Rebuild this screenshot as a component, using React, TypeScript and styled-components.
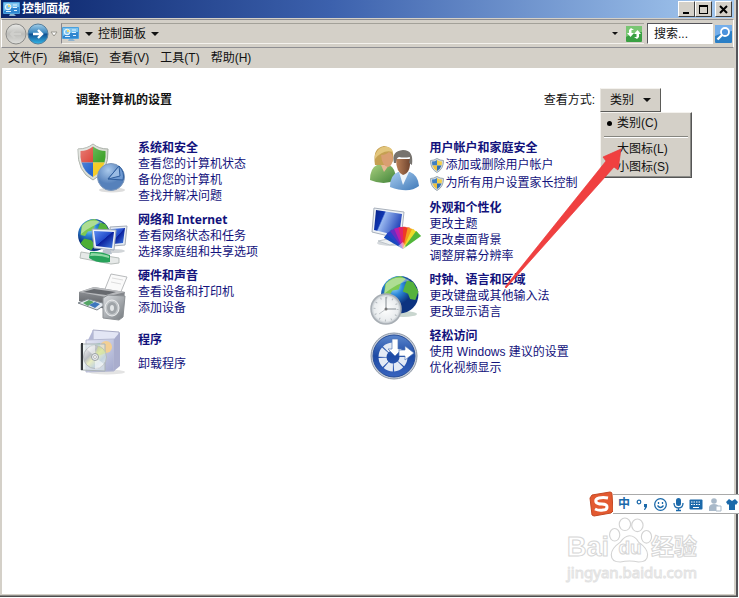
import React from "react";
import styled, { createGlobalStyle, css } from "styled-components";

const sans = '"Liberation Sans", "Noto Sans CJK SC", sans-serif';
const face = "#d4d0c8";
const navy = "#12127c";

const GlobalStyle = createGlobalStyle`
  * { box-sizing: border-box; }
  body { margin: 0; background: #fff; font: 12px/16px ${sans}; color: #111; }
  button, input { font: inherit; color: inherit; margin: 0; padding: 0; border: 0; background: none; border-radius: 0; }
  ul { list-style: none; margin: 0; padding: 0; }
  h1, h2, p { margin: 0; font-size: 12px; line-height: 16px; }
  svg { display: block; flex: none; overflow: visible; }
`;

const Desktop = styled.div`
  position: relative;
  min-height: 100vh;
  padding: 0 1px 1px 0;
  display: flex;
  overflow: hidden;
`;
const Window = styled.div`
  flex: 1;
  display: flex;
  flex-direction: column;
  background: ${face};
  padding: 0 2px 2px 1px;
  border-right: 2px solid #55555a;
  border-bottom: 1px solid #4c4c4c;
  box-shadow: inset 0 -1px 0 #8c8c88;
`;
const TitleBar = styled.header`
  display: flex;
  align-items: center;
  gap: 2px;
  height: 18px;
  padding: 0 2px;
  color: #fff;
  background: linear-gradient(90deg, #0a246a, #3c61ad 45%, #a6caf0);
`;
const Title = styled.h1`
  flex: 1;
  font-weight: 700;
`;
const Captions = styled.div`
  display: flex;
`;
const CaptionButton = styled.button<{ $apart?: boolean }>`
  width: 17px;
  height: 16px;
  display: grid;
  place-items: center;
  background: ${face};
  border: 1px solid;
  border-color: #fff #404040 #404040 #fff;
  margin-left: ${(p) => (p.$apart ? "3px" : "0")};
`;
const Toolbar = styled.div`
  display: flex;
  align-items: center;
  height: 29px;
  margin-top: 1px;
  padding: 0 1px 0 3px;
  border: 1px solid;
  border-color: #8e8e92 #fff #8e8e92 #fff;
`;
const NavButton = styled.button`
  display: block;
`;
const Address = styled.div`
  flex: 1;
  display: flex;
  align-items: center;
  height: 21px;
  margin-left: 3px;
  border-top: 1px solid #a3a199;
  border-left: 1px solid #87858c;
  border-bottom: 1px solid #f4f2ee;
`;
const CrumbButton = styled.button`
  display: flex;
  align-items: center;
  gap: 5px;
  margin-left: 6px;
`;
const Spacer = styled.span`
  flex: 1;
`;
const RefreshButton = styled.button`
  margin: 0 2px 0 8px;
`;
const Search = styled.form`
  display: flex;
  align-items: center;
  gap: 2px;
  margin-left: 3px;
`;
const SearchInput = styled.input`
  width: 66px;
  height: 21px;
  padding: 0 6px;
  background: #fff;
  border: 1px solid;
  border-color: #55555a #fff #fff #55555a;
  outline: 0;
  &::placeholder { color: #111; opacity: 1; }
`;
const MenuBar = styled.nav`
  display: flex;
  gap: 11px;
  height: 20px;
  padding: 2px 7px;
`;
const MenuButton = styled.button`
  line-height: 16px;
`;
const Content = styled.main`
  flex: 1;
  background: #fff;
  margin-left: 1px;
  padding: 20px 73px 40px 74px;
`;
const ContentHead = styled.div`
  display: flex;
  align-items: center;
  height: 24px;
`;
const Heading = styled.h2`
  flex: 1;
`;
const ViewPicker = styled.div`
  position: relative;
  display: flex;
  align-items: center;
  gap: 5px;
`;
const ViewButton = styled.button`
  display: flex;
  align-items: center;
  gap: 9px;
  height: 24px;
  padding: 0 9px;
  background: ${face};
  border: 1px solid;
  border-color: #f4f2ee #5b5b58 #5b5b58 #e8e5df;
`;
const ViewMenu = styled.ul`
  position: absolute;
  top: 24px;
  right: -31px;
  width: 92px;
  padding: 1px 3px;
  background: ${face};
  border: 1px solid;
  border-color: #f4f2ee #555 #555 #f4f2ee;
  box-shadow: inset -1px -1px 0 #8c8c88;
`;
const ViewItem = styled.button`
  display: flex;
  align-items: center;
  width: 100%;
  height: 18px;
  white-space: nowrap;
`;
const Mark = styled.span`
  width: 13px;
  display: flex;
  justify-content: center;
  padding-right: 3px;
`;
const Separator = styled.li`
  height: 2px;
  margin: 4px 0 2px;
  border-top: 1px solid #85857f;
  border-bottom: 1px solid #fff;
`;
const Arrow = styled.svg`
  position: absolute;
  top: 61px;
  right: 38px;
  pointer-events: none;
`;
const Categories = styled.div`
  display: grid;
  grid-template-columns: 1fr 1fr;
  margin-top: 28px;
  padding-left: 2px;
`;
const Column = styled.div`
  display: flex;
  flex-direction: column;
  gap: 8px;
`;
const Category = styled.section`
  display: flex;
  gap: 12px;
  min-height: 48px;
`;
const IconBox = styled.div`
  width: 48px;
  height: 44px;
  margin-top: 4px;
`;
const Links = styled.div<{ $airy?: boolean }>`
  display: flex;
  flex-direction: column;
  align-items: flex-start;
  ${(p) => p.$airy && css`gap: 8px; padding-top: 8px;`}
`;
const linkLook = css`
  color: ${navy};
  text-decoration: none;
  &:hover { text-decoration: underline; }
`;
const CategoryLink = styled.a`
  ${linkLook}
  font-family: "Noto Sans", "Noto Sans CJK SC", sans-serif;
  font-weight: 700;
  line-height: 16px;
  height: 16px;
`;
const TaskLink = styled.a<{ $shield?: boolean }>`
  ${linkLook}
  display: flex;
  align-items: center;
  gap: 2px;
  height: ${(p) => (p.$shield ? "18px" : "16px")};
  white-space: pre;
`;
const InputBar = styled.div`
  position: absolute;
  right: 0;
  top: 492px;
  display: flex;
  align-items: center;
`;
const InputStrip = styled.div`
  display: flex;
  align-items: center;
  gap: 4px;
  height: 20px;
  padding-left: 4px;
  background: #fff;
  border: 1px solid #aaa;
  border-width: 1px 0;
  color: #1b69aa;
  font-weight: 700;
`;
const Tool = styled.button`
  width: 14px;
  height: 16px;
  display: grid;
  place-items: center;
`;
const Watermark = styled.div`
  position: absolute;
  right: 40px;
  top: 518px;
  width: 132px;
  color: #fff;
  -webkit-text-stroke: 1px #d6d6d6;
`;
const WatermarkName = styled.div`
  display: flex;
  align-items: flex-end;
  height: 44px;
  font: 700 27px/30px ${sans};
`;
const Paw = styled.div`
  position: relative;
  width: 42px;
  height: 44px;
  display: flex;
  justify-content: center;
  align-items: flex-end;
  font: 700 19px/28px ${sans};
`;
const PawShape = styled.svg`
  position: absolute;
  inset: 0;
`;
const PawText = styled.span`
  position: relative;
`;
const WatermarkCjk = styled.span`
  font-size: 23px;
`;
const WatermarkSite = styled.div`
  font: 15px/20px "Noto Sans", sans-serif;
  -webkit-text-stroke: 1px #e2e2e2;
`;

const Down = ({ size = 8 }: { size?: number }) => (
  <svg width={size} height={size / 2} viewBox="0 0 8 4"><path d="M0 0h8L4 4z" fill="#111" /></svg>
);

const PanelIcon = () => (
  <svg width="17" height="16" viewBox="0 0 17 16">
    <rect x="0" y="1" width="17" height="12" rx="1" fill="#4aa0de" />
    <rect x="1" y="2" width="15" height="10" fill="#2f86d0" />
    <path d="M1 2h15v4Q8 6 1 10z" fill="#7cc3ee" />
    <circle cx="5" cy="6" r="2.6" fill="none" stroke="#e5f5ff" strokeWidth="1.2" />
    <path d="M5 6V3.4A2.6 2.6 0 0 1 7.6 6z" fill="#e8d87a" />
    <path d="M10 4h4M10 6.5h4M3 10.5h5M11 9.5h3" stroke="#e0f2ff" />
    <path d="M7 13h4l2 2H6z" fill="#8fb2ce" />
  </svg>
);

const BackIcon = () => (
  <svg width="22" height="22" viewBox="0 0 22 22">
    <defs><linearGradient id="back" x2="0" y2="1"><stop stopColor="#e9e9e6" /><stop offset=".5" stopColor="#bdbdba" /><stop offset="1" stopColor="#dededb" /></linearGradient></defs>
    <circle cx="11" cy="11" r="10" fill="url(#back)" stroke="#8b8b89" />
    <path d="M16 11H6m4-4-4 4 4 4" fill="none" stroke="#cfcfcc" strokeWidth="2" />
  </svg>
);
const ForwardIcon = () => (
  <svg width="22" height="22" viewBox="0 0 22 22">
    <defs><linearGradient id="fwd" x2="0" y2="1"><stop stopColor="#a4cfe9" /><stop offset=".45" stopColor="#3684bd" /><stop offset=".5" stopColor="#0e4f91" /><stop offset="1" stopColor="#35b7e8" /></linearGradient></defs>
    <circle cx="11" cy="11" r="10" fill="url(#fwd)" stroke="#557e9c" />
    <path d="M6 11h9m-4-4 4 4-4 4" fill="none" stroke="#fff" strokeWidth="2.4" />
  </svg>
);
const RefreshIcon = () => (
  <svg width="16" height="16" viewBox="0 0 16 16">
    <rect width="16" height="16" rx="1" fill="#3aa043" /><path d="M0 0h16v6Q8 6 0 11z" fill="#79c673" />
    <path d="M8 4H5.500v3H8l-3.500 4L1 7h2V4l2-2zM8 11h2.500V8H8l3.500-4L15 8h-2v3l-2 2z" fill="#fff" />
  </svg>
);
const SearchIcon = () => (
  <svg width="17" height="18" viewBox="0 0 17 18">
    <rect width="17" height="18" rx="1" fill="#2b7fc6" /><path d="M0 0h17v6Q8 7 0 11z" fill="#74aeea" />
    <circle cx="10" cy="7" r="4" fill="#4b93dd" stroke="#fff" strokeWidth="1.800" /><path d="m7 10-4.500 4.500" stroke="#fff" strokeWidth="2.400" />
  </svg>
);

const ShieldIcon = () => (
  <svg width="14" height="15" viewBox="0 0 14 15">
    <path d="M7 .5Q10 2.500 13.500 2.500 13.500 11 7 14.500.5 11 .5 2.500 4 2.500 7 .5z" fill="#d6dde2" stroke="#9aa7af" />
    <path d="M7 2Q5 3.500 2 3.600 2 6 2.500 7.500H7z" fill="#3f7fc2" />
    <path d="M7 2q2 1.500 5 1.600 0 2.400-.5 3.900H7z" fill="#f2cf4a" />
    <path d="M2.500 7.500H7V13Q3.500 11 2.500 7.500z" fill="#eec23c" />
    <path d="M11.500 7.500H7V13q3.500-2 4.500-5.500z" fill="#2f6db4" />
  </svg>
);

const SecurityIcon = () => (
  <svg width="48" height="50" viewBox="0 0 48 50">
    <defs>
      <radialGradient id="pie" cx=".4" cy=".25"><stop stopColor="#a9c9ec" /><stop offset="1" stopColor="#5681bb" /></radialGradient>
      <linearGradient id="gloss" x2="1" y2="1"><stop stopColor="#fff" stopOpacity=".4" /><stop offset=".6" stopColor="#fff" stopOpacity="0" /></linearGradient>
    </defs>
    <ellipse cx="34" cy="46" rx="13" ry="2.500" fill="#ddd" />
    <path d="M15 0Q21 5 30 5 31 28 15 36-1 28 0 5 9 5 15 0z" fill="#d9dcd5" stroke="#a5aca4" />
    <path d="M15 2.500Q9 7 2.500 7 2 13 3.500 18.500H15z" fill="#da3a2e" />
    <path d="M15 2.500Q21 7 27.500 7q.5 6-1 11.500H15z" fill="#43a52f" />
    <path d="M3.500 18.500H15V33Q6 28 3.500 18.500z" fill="#2766cd" />
    <path d="M26.500 18.500H15V33q9-5 11.500-14.500z" fill="#f5cc28" />
    <path d="M15 0Q21 5 30 5 31 28 15 36-1 28 0 5 9 5 15 0z" fill="url(#gloss)" />
    <circle cx="33" cy="33" r="13.500" fill="url(#pie)" stroke="#7d98bb" />
    <path d="M30 35 41 22q6 6 4 14z" fill="#6f9ad2" stroke="#2f5e9e" /><path d="m30 35 11-13 1 10z" fill="#9abce4" stroke="#2f5e9e" />
  </svg>
);

const Globe = ({ id }: { id: string }) => (
  <>
    <defs><radialGradient id={id} cx=".35" cy=".28"><stop stopColor="#a7e4fb" /><stop offset=".45" stopColor="#2d8ada" /><stop offset="1" stopColor="#0c3380" /></radialGradient></defs>
    <circle cx="18" cy="18" r="18" fill={`url(#${id})`} />
    <path d="M4 8Q9 1 19 0l5 3-5 4-2 6-6 1-3 5-5-1z" fill="#7cc952" />
    <path d="m25 4 6 2 5 9-3 8-5-1-2-5-5-2 2-6z" fill="#55b23d" />
    <path d="m7 22 8 2 4 5-4 6Q5 32 3 27z" fill="#4dae36" />
    <path d="M5 7Q14-2 28 4 17 6 3 17z" fill="#fff" opacity=".38" />
  </>
);

const NetworkIcon = () => (
  <svg width="49" height="49" viewBox="0 0 49 49">
    <defs><linearGradient id="screen" x2="1" y2="1"><stop stopColor="#5b8df2" /><stop offset=".48" stopColor="#234bc9" /><stop offset=".5" stopColor="#0b1f9d" /><stop offset="1" stopColor="#4381e4" /></linearGradient></defs>
    <g transform="translate(0 3) scale(.89)"><Globe id="net" /></g>
    <ellipse cx="36" cy="35" rx="11" ry="2" fill="#d1d5d8" />
    <path d="m32 11 17-1-2 19-13 1z" fill="#e7edf4" stroke="#a4acb8" /><path d="m33 13 14-1-2 15-10 1z" fill="url(#screen)" />
    <path d="m14 13 24 1-2 20-20-2z" fill="#edf2f8" stroke="#9ca7b6" /><path d="m16 15 20 1-2 16-16-2z" fill="url(#screen)" />
    <path d="m25 34 7-1 2 5-10 1z" fill="#b8c2cc" />
    <path d="m3 36 38 6v5l-8 1L2 42z" fill="#e6e9e8" stroke="#b7bdba" />
    <path d="M12 36q10-1 20 3v7q-12 2-21-4z" fill="#27a25a" /><path d="M13 37q10 0 18 3v2q-9-3-19-2z" fill="#90d8a5" />
  </svg>
);

const HardwareIcon = () => (
  <svg width="49" height="46" viewBox="0 0 49 46">
    <defs>
      <linearGradient id="case" x2="0" y2="1"><stop stopColor="#9a9da1" /><stop offset="1" stopColor="#54575c" /></linearGradient>
      <linearGradient id="speaker" x2="1" y2="1"><stop stopColor="#dcdfe2" /><stop offset="1" stopColor="#74797e" /></linearGradient>
    </defs>
    <g transform="translate(0 2)">
      <path d="m27 15 6-15 16 3-7 17z" fill="#fafafa" stroke="#b9bbbd" /><path d="m34 4 11 2m-12 2 10 2" stroke="#ddd" />
      <path d="m1 18 15-5 31 5-2 12-18 5L1 27z" fill="url(#case)" /><path d="m1 18 15-5 31 5-19 5z" fill="#b8babd" />
      <path d="m5 18 11-3 22 3-10 3z" fill="#66696e" />
      <path d="m0 29 10-4 18 5-9 6z" fill="#e5eaf0" stroke="#7d858c" /><path d="m5 29 6-3 5 2-6 4z" fill="#54a465" /><path d="m11 31 6-3 5 2-5 4z" fill="#3d76bd" />
      <path d="m25 24 5-3 17 1-2 21-4 3-16-2z" fill="url(#speaker)" stroke="#8b8f93" />
      <ellipse cx="34" cy="34" rx="7" ry="8" fill="#c2c6c9" stroke="#eceeef" /><ellipse cx="34" cy="34" rx="5" ry="6" fill="#9fa4a8" /><ellipse cx="34" cy="34" rx="2" ry="3" fill="#e3e6e7" />
    </g>
  </svg>
);

const ProgramsIcon = () => (
  <svg width="46" height="46" viewBox="0 0 46 46">
    <defs>
      <linearGradient id="box" x2="1" y2="1"><stop stopColor="#e5e8f6" /><stop offset="1" stopColor="#a1a7cc" /></linearGradient>
      <linearGradient id="disc" x2="1" y2="1"><stop stopColor="#fff" /><stop offset=".35" stopColor="#b9bdc2" /><stop offset=".5" stopColor="#e8edc2" /><stop offset=".7" stopColor="#c3d4df" /><stop offset="1" stopColor="#eee" /></linearGradient>
    </defs>
    <g transform="translate(3 1)">
      <ellipse cx="26" cy="43" rx="18" ry="2.500" fill="#e3e3e3" />
      <path d="m12 1 26 2v9H12z" fill="#e3e6f5" stroke="#a8abc5" /><path d="m7 11 5-10v10z" fill="#b4b8d6" />
      <path d="m5 11 28-1v32l-28 1z" fill="url(#box)" stroke="#b6bad2" /><path d="m33 10 6-7v34l-6 5z" fill="#a9adcd" />
      <circle cx="25" cy="18" r="6" fill="#f3cf94" /><path d="m10 16 9-2v10z" fill="#9dd2c0" />
      <path d="M0 15h24v27L0 41z" fill="#dfe9ea" fillOpacity=".65" stroke="#aab2b5" /><path d="M0 14h2v27H0z" fill="#34383c" />
      <circle cx="14" cy="28" r="11.500" fill="url(#disc)" stroke="#b5babd" /><path d="m14 28-8-8q4-4 8-4zM14 28l9 7q-4 5-9 5z" fill="#fff" opacity=".55" />
      <path d="m14 28 3-11q6 2 8 7z" fill="#d4e28e" opacity=".55" />
      <circle cx="14" cy="28" r="3.500" fill="#eceff0" stroke="#999fa3" /><circle cx="14" cy="28" r="1.500" fill="#fff" stroke="#bbb" />
    </g>
  </svg>
);

const UsersIcon = () => (
  <svg width="48" height="47" viewBox="0 0 48 47">
    <defs>
      <linearGradient id="green" x2="1" y2="1"><stop stopColor="#a9d07e" /><stop offset="1" stopColor="#3f8137" /></linearGradient>
      <linearGradient id="blue" x2="1" y2="1"><stop stopColor="#a9cdf0" /><stop offset="1" stopColor="#3f79b8" /></linearGradient>
      <linearGradient id="skin" x2="1"><stop stopColor="#bb8158" /><stop offset="1" stopColor="#70452f" /></linearGradient>
    </defs>
    <g transform="translate(0 2)">
      <path d="M0 34Q0 22 7 19h12q7 3 7 15-12 6-26 0z" fill="url(#green)" />
      <path d="m11 19 3 7 5-7-1-4h-6z" fill="#e6b894" />
      <path d="M5 19Q2 2 14 0q11 1 9 14-1 5-5 5H9z" fill="#c5a052" />
      <path d="M11 9q5 0 8-3 4 2 4 7-1 7-5 8-6-1-7-12z" fill="#d99f72" />
      <path d="M5 9Q9-1 18 1q4 1 5 5Q13 3 5 13z" fill="#e3c67d" />
      <path d="M20 41q0-12 8-15h12q8 3 9 14-10 8-29 1z" fill="url(#blue)" />
      <path d="m29 26 4 13 6-13-3-5h-5z" fill="#edf4fa" />
      <path d="M26 13h14q1 14-7 16-7-3-7-16z" fill="url(#skin)" />
      <path d="M24 17Q21 5 33 4q11 0 9 15l-3-2 1-6q-6 1-11 0-3 1-3 6z" fill="#77736e" />
    </g>
  </svg>
);

const swatches = ["#1749bd", "#2a42c8", "#6a2cc0", "#b81fae", "#e0246a", "#ee3a26", "#f39a1e", "#eedb2b", "#52b63a"];
const AppearanceIcon = () => (
  <svg width="48" height="47" viewBox="0 0 48 47">
    <defs><linearGradient id="wide" x2="1" y2=".4"><stop stopColor="#092284" /><stop offset=".35" stopColor="#0e35b1" /><stop offset=".4" stopColor="#98b7ef" /><stop offset="1" stopColor="#2547ba" /></linearGradient></defs>
    <g transform="translate(1 4)">
      <ellipse cx="21" cy="35" rx="15" ry="3" fill="#d5d9dd" />
      <path d="m15 27 9 1 1 6-10-1z" fill="#b7bec7" /><path d="m7 33 10-2 12 3-10 3z" fill="#edf0f2" stroke="#bec5ca" />
      <path d="m3 0 30 4-3 27L1 24z" fill="#edf1f5" stroke="#a9b1bc" /><path d="m5 2 26 4-3 22L3 22z" fill="url(#wide)" />
      {swatches.map((c, i) => (
        <path key={c} d="M32 41 29 19h7z" fill={c} transform={`rotate(${i * 12 - 52} 32 41)`} />
      ))}
      <path d="m27 38 5-4 3 5-3 3z" fill="#fff" opacity=".5" />
    </g>
  </svg>
);

const ClockIcon = () => (
  <svg width="50" height="50" viewBox="0 0 50 50">
    <defs><radialGradient id="dial"><stop stopColor="#fff" /><stop offset=".8" stopColor="#e9ecee" /><stop offset="1" stopColor="#b5bcc2" /></radialGradient></defs>
    <ellipse cx="33" cy="38" rx="14" ry="3" fill="#c9d6cf" />
    <g transform="translate(11 0) scale(1.040)"><Globe id="time" /></g>
    <circle cx="16" cy="33" r="15" fill="url(#dial)" stroke="#a8aeb4" strokeWidth="1.500" />
    <circle cx="16" cy="33" r="11.500" fill="none" stroke="#b3b9be" strokeDasharray="1 5.020" strokeWidth="2" />
    <path d="M16 21v12h10" fill="none" stroke="#858c92" /><path d="m16 33-7 5" stroke="#c4c8cc" /><circle cx="16" cy="33" r="1.500" fill="#777" />
  </svg>
);

const EaseIcon = () => (
  <svg width="48" height="49" viewBox="0 0 48 49">
    <defs><linearGradient id="ease" x2="0" y2="1"><stop stopColor="#5b86cc" /><stop offset=".5" stopColor="#1d4aa5" /><stop offset="1" stopColor="#3964be" /></linearGradient></defs>
    <circle cx="24" cy="24" r="23" fill="#c8ced8" stroke="#8f99a8" /><circle cx="24" cy="24" r="21" fill="url(#ease)" stroke="#254c98" />
    <circle cx="23" cy="25" r="10.500" fill="none" stroke="#e3eaf5" strokeWidth="8" strokeDasharray="7.240 1 7.240 1 7.240 1 7.240 1 7.240 1 7.240 17.530" />
    <path d="M22 7h6v10h4l-7 7-7-7h4z" fill="#fff" stroke="#5578b8" strokeWidth=".7" />
    <path d="M29 18h6v-4l9 7-9 7v-4h-6z" fill="#fff" stroke="#5578b8" strokeWidth=".7" />
  </svg>
);

type Item = { title: string; icon: React.ReactNode; tasks: string[]; shield?: boolean; airy?: boolean };
const left: Item[] = [
  { title: "系统和安全", icon: <SecurityIcon />, tasks: ["查看您的计算机状态", "备份您的计算机", "查找并解决问题"] },
  { title: "网络和 Internet", icon: <NetworkIcon />, tasks: ["查看网络状态和任务", "选择家庭组和共享选项"] },
  { title: "硬件和声音", icon: <HardwareIcon />, tasks: ["查看设备和打印机", "添加设备"] },
  { title: "程序", icon: <ProgramsIcon />, tasks: ["卸载程序"], airy: true },
];
const right: Item[] = [
  { title: "用户帐户和家庭安全", icon: <UsersIcon />, tasks: ["添加或删除用户帐户", "为所有用户设置家长控制"], shield: true },
  { title: "外观和个性化", icon: <AppearanceIcon />, tasks: ["更改主题", "更改桌面背景", "调整屏幕分辨率"] },
  { title: "时钟、语言和区域", icon: <ClockIcon />, tasks: ["更改键盘或其他输入法", "更改显示语言"] },
  { title: "轻松访问", icon: <EaseIcon />, tasks: ["使用 Windows 建议的设置", "优化视频显示"] },
];

const CategoryList = ({ items }: { items: Item[] }) => (
  <Column>
    {items.map((it) => (
      <Category key={it.title}>
        <IconBox>{it.icon}</IconBox>
        <Links $airy={it.airy}>
          <CategoryLink href="#">{it.title}</CategoryLink>
          {it.tasks.map((t) => (
            <TaskLink key={t} href="#" $shield={it.shield}>
              {it.shield && <ShieldIcon />}
              <span>{t}</span>
            </TaskLink>
          ))}
        </Links>
      </Category>
    ))}
  </Column>
);

export default function App() {
  return (
    <Desktop>
      <GlobalStyle />
      <Window>
        <TitleBar>
          <PanelIcon />
          <Title>控制面板</Title>
          <Captions>
            <CaptionButton aria-label="最小化"><svg width="9" height="9"><path d="M1 7h6v2H1z" /></svg></CaptionButton>
            <CaptionButton aria-label="最大化"><svg width="9" height="9"><path d="M0 0h9v9H0zM1 2v6h7V2z" fillRule="evenodd" /></svg></CaptionButton>
            <CaptionButton aria-label="关闭" $apart><svg width="9" height="9"><path d="m1 1 7 7M8 1 1 8" stroke="#000" strokeWidth="2" /></svg></CaptionButton>
          </Captions>
        </TitleBar>
        <Toolbar>
          <NavButton aria-label="后退"><BackIcon /></NavButton>
          <NavButton aria-label="前进"><ForwardIcon /></NavButton>
          <NavButton aria-label="最近的页面"><svg width="9" height="6" viewBox="0 0 9 6"><path d="M2 1h6L5 5z" fill="#fff" stroke="#99978f" /></svg></NavButton>
          <Address>
            <PanelIcon />
            <CrumbButton><Down />控制面板<Down /></CrumbButton>
            <Spacer />
            <NavButton aria-label="以前的位置"><Down size={6} /></NavButton>
            <RefreshButton aria-label="刷新"><RefreshIcon /></RefreshButton>
          </Address>
          <Search>
            <SearchInput aria-label="搜索" placeholder="搜索..." />
            <NavButton type="button" aria-label="开始搜索"><SearchIcon /></NavButton>
          </Search>
        </Toolbar>
        <MenuBar>
          {["文件(F)", "编辑(E)", "查看(V)", "工具(T)", "帮助(H)"].map((m) => <MenuButton key={m}>{m}</MenuButton>)}
        </MenuBar>
        <Content>
          <ContentHead>
            <Heading>调整计算机的设置</Heading>
            <ViewPicker>
              <span id="view-label">查看方式:</span>
              <ViewButton aria-haspopup="menu" aria-expanded="true" aria-labelledby="view-label view-value">
                <span id="view-value">类别</span><Down />
              </ViewButton>
              <ViewMenu role="menu" aria-labelledby="view-label">
                <li role="none"><ViewItem role="menuitemradio" aria-checked="true"><Mark><svg width="5" height="5"><circle cx="2.500" cy="2.500" r="2.500" /></svg></Mark>类别(C)</ViewItem></li>
                <Separator role="separator" />
                <li role="none"><ViewItem role="menuitemradio" aria-checked="false"><Mark />大图标(L)</ViewItem></li>
                <li role="none"><ViewItem role="menuitemradio" aria-checked="false"><Mark />小图标(S)</ViewItem></li>
              </ViewMenu>
              <Arrow width="118" height="139" viewBox="0 0 118 139" aria-hidden="true">
                <path d="M0 138 101 12 98 8 116 0 113 21 109 18 1 139z" fill="#f04040" stroke="#e8383a" strokeWidth=".7" />
              </Arrow>
            </ViewPicker>
          </ContentHead>
          <Categories>
            <CategoryList items={left} />
            <CategoryList items={right} />
          </Categories>
        </Content>
      </Window>
      <Watermark>
        <WatermarkName>
          <span>Bai</span>
          <Paw>
            <PawShape width="42" height="44" viewBox="0 0 37 42" preserveAspectRatio="none" fill="#fff" stroke="#d3d3d3">
              <ellipse cx="5" cy="16" rx="4.500" ry="6" /><ellipse cx="14" cy="6" rx="5" ry="6" /><ellipse cx="25" cy="7" rx="5" ry="6" /><ellipse cx="33" cy="18" rx="4.500" ry="6" />
              <path d="M18 17q5 0 8 6 8 6 8 12 0 7-8 7-8-2-16 0-8 0-8-7 0-6 8-12 4-6 8-6z" />
            </PawShape>
            <PawText>du</PawText>
          </Paw>
          <WatermarkCjk>经验</WatermarkCjk>
        </WatermarkName>
        <WatermarkSite>jingyan.baidu.com</WatermarkSite>
      </Watermark>
      <InputBar>
        <svg width="23" height="24" viewBox="0 0 23 24">
          <path d="M2 3 20 0q2 0 2 2l1 17-2 2-17 3-2-1L0 6z" fill="#e35a31" stroke="#c34822" />
          <path d="M18 6q-5-1-9 0-4 1-3 4 1 2 6 2 5 0 5 3 0 3-4 3-4 1-8-1" fill="none" stroke="#fff" strokeWidth="3" />
        </svg>
        <InputStrip>
          <Tool aria-label="中文输入">中</Tool>
          <Tool aria-label="标点"><svg width="12" height="12"><circle cx="3" cy="4" r="1.800" fill="none" stroke="#1b69aa" strokeWidth="1.200" /><path d="M8 6h3v3L9 12H8l1-3H8z" fill="#1b69aa" /></svg></Tool>
          <Tool aria-label="表情"><svg width="13" height="13" fill="none" stroke="#1b69aa" strokeWidth="1.300"><circle cx="6.500" cy="6.500" r="5.800" /><path d="M3.500 7.500q3 4 6 0M4.500 4v2M8.500 4v2" /></svg></Tool>
          <Tool aria-label="语音"><svg width="11" height="13"><rect x="3" width="5" height="8" rx="2.500" fill="#1b69aa" /><path d="M1 5q0 5 4.500 5T10 5M5.500 10v3M3 12.500h5" fill="none" stroke="#1b69aa" strokeWidth="1.300" /></svg></Tool>
          <Tool aria-label="软键盘"><svg width="14" height="11"><rect x=".5" y=".5" width="13" height="10" rx="1" fill="#1b69aa" /><path d="M2 3h10M2 5.500h10" stroke="#fff" strokeDasharray="1.500 1" /><path d="M4 8.500h6" stroke="#fff" /></svg></Tool>
          <Tool aria-label="账户"><svg width="13" height="13" fill="#a9b9c9"><circle cx="6" cy="3" r="2.800" /><path d="M1 13V9q1-3 5-3t5 3v4z" /><path d="M8 8h5v5H8z" fill="#fff" stroke="#a9b9c9" /></svg></Tool>
          <Tool aria-label="皮肤"><svg width="12" height="11"><path d="m3 0 3 2 3-2 3 3-2 3-1-1v6H3V5L2 6 0 3z" fill="#1b69aa" /></svg></Tool>
        </InputStrip>
      </InputBar>
    </Desktop>
  );
}
